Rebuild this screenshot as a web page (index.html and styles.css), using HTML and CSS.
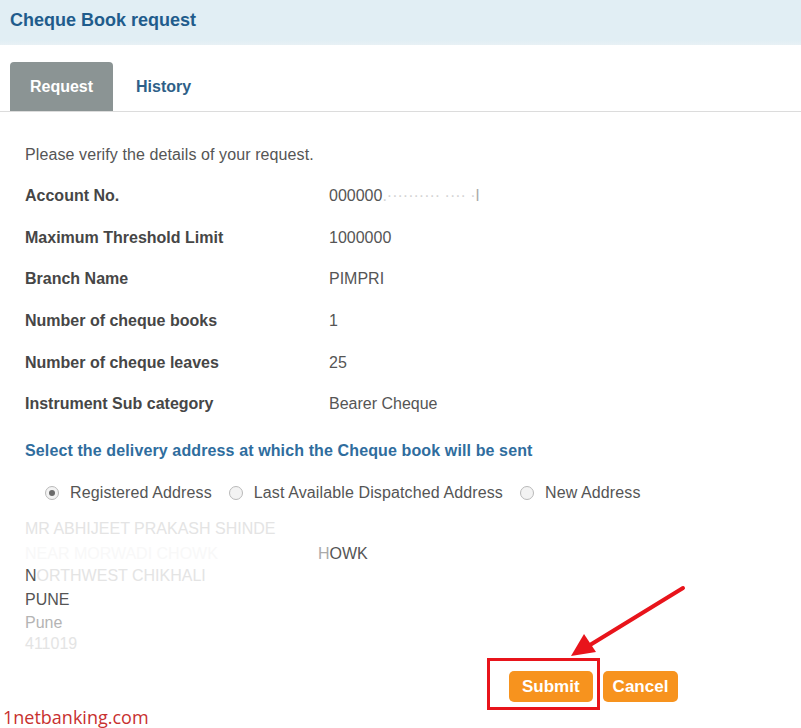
FILE: index.html
```html
<!DOCTYPE html>
<html>
<head>
<meta charset="utf-8">
<link rel="stylesheet" href="styles.css">
</head>
<body>
<div class="page">
  <div class="header"><h1 class="title">Cheque Book request</h1></div>
  <div class="tabs">
    <div class="tab active">Request</div>
    <div class="tab">History</div>
  </div>
  <div class="content">
    <p class="intro">Please verify the details of your request.</p>
    <div class="details">
      <div class="label">Account No.</div><div class="value">000000<span class="blur">.·········· ···· ·</span><span class="faint">l</span></div>
      <div class="label">Maximum Threshold Limit</div><div class="value">1000000</div>
      <div class="label">Branch Name</div><div class="value">PIMPRI</div>
      <div class="label">Number of cheque books</div><div class="value">1</div>
      <div class="label">Number of cheque leaves</div><div class="value">25</div>
      <div class="label">Instrument Sub category</div><div class="value">Bearer Cheque</div>
    </div>
    <div class="subhead">Select the delivery address at which the Cheque book will be sent</div>
    <div class="radios">
      <label class="radio"><span class="dot checked"></span>Registered Address</label>
      <label class="radio"><span class="dot"></span>Last Available Dispatched Address</label>
      <label class="radio"><span class="dot"></span>New Address</label>
    </div>
    <div class="address">
      <div class="aline l1"><span class="ghost1">MR ABHIJEET PRAKASH SHINDE</span></div>
      <div class="aline l2"><span class="gap"><span class="ghost">NEAR MORWADI CHOWK</span></span><span class="faint">H</span>OWK</div>
      <div class="aline l3">N<span class="ghost1">ORTHWEST CHIKHALI</span></div>
      <div class="aline l4">PUNE</div>
      <div class="aline l5"><span class="ghost2">Pune</span></div>
      <div class="aline l6"><span class="ghost1">411019</span></div>
    </div>
    <div class="actions">
      <button class="btn">Submit</button>
      <button class="btn btn-cancel">Cancel</button>
    </div>
  </div>
  <div class="highlight"></div>
  <svg class="arrow" width="801" height="728" viewBox="0 0 801 728">
    <line x1="683" y1="588" x2="590" y2="645" stroke="#e8141b" stroke-width="4" stroke-linecap="round"/>
    <polygon points="571,656 584,634 596,652" fill="#e8141b"/>
  </svg>
  <div class="watermark">1netbanking.com</div>
</div>
</body>
</html>
```

FILE: styles.css
```css
* { box-sizing: border-box; }
html, body { margin: 0; padding: 0; background: #fff; }
body { font-family: "Liberation Sans", Arial, sans-serif; color: #444; }
.page { position: relative; width: 801px; height: 728px; overflow: hidden; }

.header {
  height: 45px;
  background: linear-gradient(#e1eef4 0, #e1eef4 40px, #e8f1f5 45px);
  padding: 8px 0 0 10px;
}
.title { margin: 0; font-size: 18px; line-height: 24px; font-weight: bold; color: #1f5c8c; }

.tabs {
  margin-top: 17px;
  padding-left: 10px;
  display: flex;
  align-items: stretch;
  border-bottom: 1px solid #dcdcdc;
  height: 50px;
}
.tab {
  display: flex; align-items: center; justify-content: center;
  font-size: 16px; font-weight: bold; color: #2e5f88;
  padding: 0 23px; height: 49px;
}
.tab.active {
  width: 103px; padding: 0;
  background: #8b9494; color: #fff;
  border-radius: 4px 4px 0 0;
}

.content { padding-left: 25px; }
.intro { margin: 34px 0 0; font-size: 16px; line-height: 18px; color: #555; letter-spacing: 0.1px; }

.details {
  margin-top: 11px;
  display: grid;
  grid-template-columns: 304px auto;
  grid-auto-rows: 41.7px;
  align-items: center;
}
.label { font-size: 16px; font-weight: bold; color: #464646; }
.value { font-size: 16px; color: #555; }
.blur { color: #d4d4d4; }
.faint { color: #aaa; }

.subhead { margin-top: 17px; font-size: 16px; line-height: 18px; font-weight: bold; color: #2f6d9e; letter-spacing: 0.12px; }

.radios { display: flex; gap: 17px; margin-top: 24px; padding-left: 20px; font-size: 16px; color: #555; letter-spacing: 0.12px; }
.radio { display: flex; align-items: center; line-height: 18px; }
.dot {
  width: 14px; height: 14px; border-radius: 50%;
  border: 1px solid #b9b9b9; background: #f3f3f3;
  margin-right: 11px; display: flex; align-items: center; justify-content: center;
}
.dot.checked::after { content: ""; width: 6px; height: 6px; border-radius: 50%; background: #6b6b6b; }

.address { margin-top: 15px; font-size: 16px; color: #555; }
.aline { line-height: 23px; white-space: nowrap; }
.l1 { height: 25px; }
.l2 { height: 22px; }
.l3 { height: 24px; }
.l4 { height: 23px; }
.l5 { height: 21px; }
.l6 { height: 23px; }
.ghost1 { color: #e4e4e4; }
.ghost2 { color: #b4b4b4; }
.ghost { color: #f8f8f8; }
.gap { display: inline-block; width: 293px; overflow: hidden; vertical-align: top; }

.actions { display: flex; gap: 10px; margin-top: 16px; padding-left: 484px; }
.btn {
  border: 0; border-radius: 5px;
  background: #f7931e; color: #fff;
  font-family: "Liberation Sans", Arial, sans-serif;
  font-size: 17px; font-weight: bold;
  height: 31px; padding: 0 13px;
}
.btn-cancel { padding: 0 10px; }

.highlight {
  position: absolute; left: 487px; top: 658px; width: 113px; height: 52px;
  border: 3px solid #e8141b;
}
.arrow { position: absolute; left: 0; top: 0; }
.watermark {
  position: absolute; left: 3px; top: 706px;
  font-family: "Open Sans", "Noto Sans", sans-serif; font-size: 18px; line-height: 22px;
  color: #c8312f;
}
```
